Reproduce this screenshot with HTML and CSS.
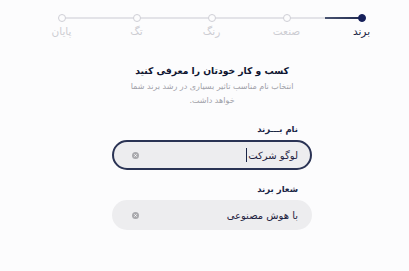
FILE: index.html
```html
<!DOCTYPE html>
<html lang="fa" dir="rtl">
<head>
<meta charset="utf-8">
<link rel="stylesheet" href="styles.css">
</head>
<body>
<div class="stepper">
  <div class="step active"><span class="dot"></span><span class="label">برند</span></div>
  <div class="step"><span class="dot"></span><span class="label">صنعت</span></div>
  <div class="step"><span class="dot"></span><span class="label">رنگ</span></div>
  <div class="step"><span class="dot"></span><span class="label">تگ</span></div>
  <div class="step last"><span class="dot"></span><span class="label">پایان</span></div>
</div>
<main class="content">
  <h1 class="title">کسب و کار خودتان را معرفی کنید</h1>
  <p class="subtitle">انتخاب نام مناسب تاثیر بسیاری در رشد برند شما خواهد داشت.</p>
  <div class="field">
    <div class="field-label">نام بـــرند</div>
    <div class="input focused"><span class="value">لوگو شرکت</span><span class="caret"></span><span class="clear"><svg viewBox="0 0 8 8" width="7" height="7"><circle cx="4" cy="4" r="4" fill="#a9a9ad"/><path d="M2.7 2.7 L5.3 5.3 M5.3 2.7 L2.7 5.3" stroke="#fff" stroke-width="1"/></svg></span></div>
  </div>
  <div class="field">
    <div class="field-label">شعار برند</div>
    <div class="input"><span class="value">با هوش مصنوعی</span><span class="clear"><svg viewBox="0 0 8 8" width="7" height="7"><circle cx="4" cy="4" r="4" fill="#a9a9ad"/><path d="M2.7 2.7 L5.3 5.3 M5.3 2.7 L2.7 5.3" stroke="#fff" stroke-width="1"/></svg></span></div>
  </div>
</main>
</body>
</html>
```
FILE: styles.css
```css
html, body {
  margin: 0;
  padding: 0;
}
body {
  background: #fcfcfd;
  font-family: "DejaVu Sans", "Noto Sans", sans-serif;
  color: #1d2747;
  width: 409px;
  height: 271px;
  overflow: hidden;
}
.stepper {
  display: flex;
  padding-top: 14px;
  padding-right: 10px;
}
.step {
  position: relative;
  width: 75px;
  display: flex;
  flex-direction: column;
  align-items: center;
}
.step::before {
  content: "";
  position: absolute;
  top: 3px;
  right: 37.5px;
  width: 75px;
  height: 1.5px;
  background: #e3e3e8;
}
.step.active::before {
  background: linear-gradient(to left, #1f2a4f 0%, #4a5472 50%, #e3e3e8 50%);
}
.step.last::before {
  display: none;
}
.dot {
  position: relative;
  box-sizing: border-box;
  width: 8px;
  height: 8px;
  border-radius: 50%;
  border: 1px solid #cfcfd6;
  background: #fcfcfd;
}
.step.active .dot {
  background: #16205a;
  border-color: #16205a;
}
.label {
  margin-top: 2px;
  font-size: 10.5px;
  line-height: 14px;
  color: #cdcdd3;
}
.step.active .label {
  color: #1d2747;
}
.content {
  width: 200px;
  margin-right: 97px;
  margin-top: 26px;
  display: flex;
  flex-direction: column;
}
.title {
  margin: 0;
  text-align: center;
  font-size: 9.2px;
  font-weight: bold;
  color: #0e1430;
  line-height: 14px;
}
.subtitle {
  margin: 2px 10px 0;
  text-align: center;
  font-size: 8px;
  line-height: 14px;
  color: #a0a0a8;
}
.field {
  display: flex;
  flex-direction: column;
  margin-top: 15px;
}
.field + .field {
  margin-top: 13px;
}
.field-label {
  font-size: 8.5px;
  font-weight: bold;
  color: #1d2747;
  padding-right: 14px;
  line-height: 12px;
  margin-bottom: 5px;
}
.input {
  box-sizing: border-box;
  height: 30px;
  border-radius: 15px;
  background: #ededef;
  border: 2px solid transparent;
  display: flex;
  align-items: center;
  padding: 0 12px 0 18px;
  font-size: 10px;
  color: #1d2240;
}
.input.focused {
  border-color: #2a3354;
}
.caret {
  width: 1px;
  height: 14px;
  background: #1d2747;
  margin-right: 1px;
}
.clear {
  margin-right: auto;
  display: flex;
}
```
